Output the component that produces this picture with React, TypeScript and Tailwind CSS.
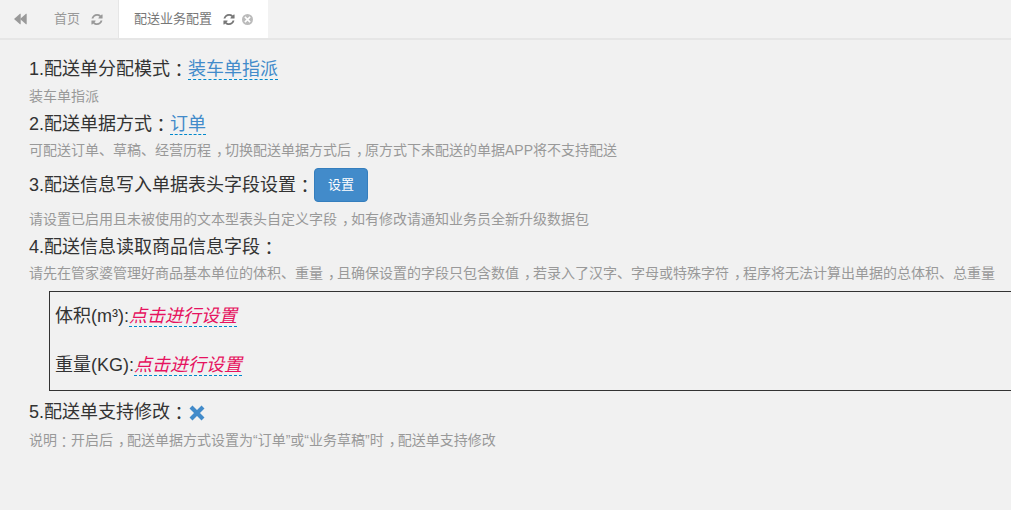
const font = "font-['Liberation_Sans','Noto_Sans_CJK_SC',sans-serif]";

function RefreshIcon({ className }: { className: string }) {
  return (
    <svg viewBox="0 0 1536 1792" className={className} fill="currentColor">
      <path d="M1511 1056q0 5-1 7-64 268-268 434.500t-478 166.500q-146 0-282.500-55t-243.500-157l-129 129q-19 19-45 19t-45-19-19-45v-448q0-26 19-45t45-19h448q26 0 45 19t19 45-19 45l-137 137q71 66 161 102t187 36q134 0 250-65t186-179q11-17 53-117 8-23 30-23h192q13 0 22.500 9.500t9.500 22.500zm25-800v448q0 26-19 45t-45 19h-448q-26 0-45-19t-19-45 19-45l138-138q-148-137-349-137-134 0-250 65t-186 179q-11 17-53 117-8 23-30 23h-199q-13 0-22.500-9.500t-9.500-22.500v-7q65-268 270-434.500t480-166.500q146 0 284 55.500t245 156.500l130-129q19-19 45-19t45 19 19 45z" />
    </svg>
  );
}

function Help({ children }: { children: React.ReactNode }) {
  return <p className="text-[14px] leading-[20px] text-[#999999]">{children}</p>;
}

// full-width punctuation sits centred in its cell in the reference
function Colon() {
  return <span className="align-[-2px] font-['Liberation_Sans','Noto_Sans_CJK_TC',sans-serif]">：</span>;
}

function Comma() {
  return <span className="ml-[5px] tracking-[-5px]">，</span>;
}

export default function App() {
  return (
    <div className={`${font} h-[510px] w-[1011px] overflow-hidden bg-[#f1f1f1] text-[#333333]`}>
      <div className="flex h-[40px] border-b-2 border-[#e6e6e6] bg-[#f2f2f2] text-[13px]">
        <div className="flex w-[119px] items-center border-r border-[#e6e6e6] text-[#999999]">
          <svg viewBox="0 0 14 12" className="ml-[13px] h-[12px] w-[14px]" fill="currentColor">
            <path d="M1 6 7 .8c.4-.3.7-.1.7.3v9.800c0 .4-.3.6-.7.300z" />
            <path d="M7 6 13 .8c.4-.3.7-.1.7.3v9.800c0 .4-.3.6-.7.300z" />
          </svg>
          <span className="ml-[27px]">首页</span>
          <RefreshIcon className="ml-[11px] h-[13px] w-[12px] text-[#999999]" />
        </div>
        <div className="flex h-[38px] w-[149px] items-center bg-white pl-[15px] text-[#777777]">
          <span>配送业务配置</span>
          <RefreshIcon className="ml-[11px] h-[13px] w-[12px] text-[#777777]" />
          <span className="ml-[7px] flex h-[11px] w-[11px] items-center justify-center rounded-full bg-[#bbbbbb] text-white">
            <svg viewBox="0 0 8 8" className="h-[7px] w-[7px]" stroke="currentColor" strokeWidth="1.800">
              <path d="M1 1 7 7M7 1 1 7" />
            </svg>
          </span>
        </div>
      </div>

      <div className="pl-[29px] pt-[16px]">
        <h3 className="h-[27px] text-[18px] leading-[27px]">
          1.配送单分配模式<Colon />
          <a className="border-b border-dashed border-[#0088cc] text-[#428bca]">装车单指派</a>
        </h3>
        <div className="mt-[3px]"><Help>装车单指派</Help></div>
        <h3 className="mt-[5px] h-[27px] text-[18px] leading-[27px]">
          2.配送单据方式<Colon />
          <a className="border-b border-dashed border-[#0088cc] text-[#428bca]">订单</a>
        </h3>
        <div className="mt-[2px]"><Help>可配送订单、草稿、经营历程<Comma />切换配送单据方式后<Comma />原方式下未配送的单据APP将不支持配送</Help></div>
        <div className="mt-[7px] flex h-[36px] items-center text-[18px]">
          <span className="pt-[2px]">3.配送信息写入单据表头字段设置<Colon /></span>
          <button className="h-[34px] w-[54px] rounded-[4px] border border-[#357ebd] bg-[#428bca] text-[13px] text-white">设置</button>
        </div>
        <div className="mt-[6px]"><Help>请设置已启用且未被使用的文本型表头自定义字段<Comma />如有修改请通知业务员全新升级数据包</Help></div>
        <h3 className="mt-[5px] h-[27px] text-[18px] leading-[27px]">4.配送信息读取商品信息字段<Colon /></h3>
        <div className="mt-[2px] whitespace-nowrap"><Help>请先在管家婆管理好商品基本单位的体积、重量<Comma />且确保设置的字段只包含数值<Comma />若录入了汉字、字母或特殊字符<Comma />程序将无法计算出单据的总体积、总重量</Help></div>
        <div className="ml-[20px] mt-[8px] h-[100px] w-[970px] border border-[#333333] pl-[5px] pt-[12px] text-[18px] leading-[25px]">
          <div>
            体积(m³):
            <a className="border-b border-dashed border-[#0088cc] italic text-[#e6135f]">点击进行设置</a>
          </div>
          <div className="mt-[24px]">
            重量(KG):
            <a className="border-b border-dashed border-[#0088cc] italic text-[#e6135f]">点击进行设置</a>
          </div>
        </div>
        <div className="mt-[8px] flex h-[27px] items-center text-[18px]">
          <span className="pt-[2px]">5.配送单支持修改<Colon /></span>
          <svg viewBox="0 0 16 16" className="ml-[1px] h-[16px] w-[16px] text-[#428bca]" fill="none" stroke="currentColor" strokeWidth="4.200">
            <path d="M2 2 14 14M14 2 2 14" />
          </svg>
        </div>
        <div className="mt-[4px]"><Help>说明<Colon />开启后<Comma />配送单据方式设置为“订单”或“业务草稿”时<Comma />配送单支持修改</Help></div>
      </div>
    </div>
  );
}
